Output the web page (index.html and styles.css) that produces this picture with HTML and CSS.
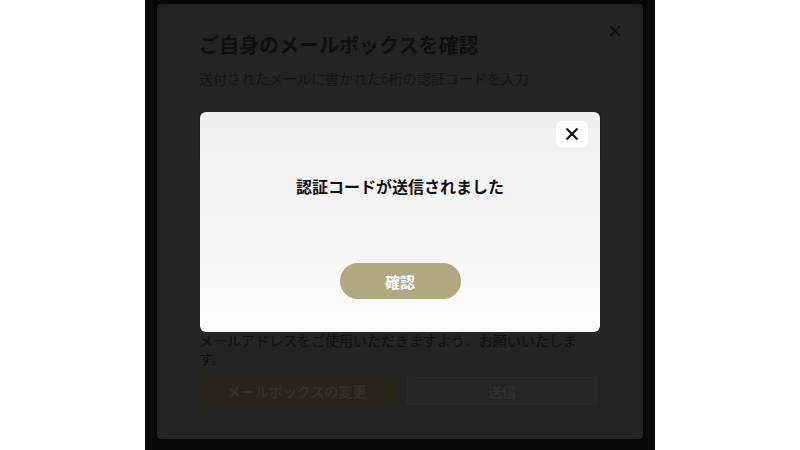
FILE: index.html
```html
<!DOCTYPE html>
<html lang="ja">
<head>
<meta charset="utf-8">
<link rel="stylesheet" href="styles.css">
</head>
<body>
<div class="frame">
  <div class="modal">
    <button class="modal-close" aria-label="閉じる">
      <svg width="12" height="12" viewBox="0 0 12 12"><path d="M1 1L11 11M11 1L1 11" stroke="currentColor" stroke-width="2" fill="none"/></svg>
    </button>
    <h1 class="modal-title">ご自身のメールボックスを確認</h1>
    <p class="modal-sub">送付されたメールに書かれた6桁の認証コードを入力</p>
    <div class="modal-hidden">
      <div class="code-input"></div>
    </div>
    <p class="modal-text">メールアドレスをご使用いただきますよう、お願いいたします。</p>
    <div class="modal-actions">
      <button class="btn btn-dark">メールボックスの変更</button>
      <button class="btn btn-ghost">送信</button>
    </div>
  </div>

  <div class="dialog">
    <button class="dialog-close" aria-label="閉じる">
      <svg width="14" height="14" viewBox="0 0 14 14"><path d="M1.5 1.5L12.5 12.5M12.5 1.5L1.5 12.5" stroke="#111" stroke-width="2.2" fill="none"/></svg>
    </button>
    <p class="dialog-title">認証コードが送信されました</p>
    <button class="dialog-btn">確認</button>
  </div>
</div>
</body>
</html>
```

FILE: styles.css
```css
* { box-sizing: border-box; }
html, body { margin: 0; padding: 0; }
body {
  background: #ffffff;
  width: 800px;
  height: 450px;
  overflow: hidden;
  font-family: "Noto Sans CJK JP", "Noto Sans", sans-serif;
}
.frame {
  position: relative;
  width: 510px;
  height: 450px;
  margin: 0 auto;
  background: #080808;
  padding: 4px 12px 0;
}
.modal {
  position: relative;
  background: #242424;
  border-radius: 4px;
  height: 435px;
  padding: 27px 42px 0;
}
.modal-close {
  position: absolute;
  top: 21px;
  right: 22px;
  width: 12px;
  height: 12px;
  padding: 0;
  border: 0;
  background: none;
  color: #111;
  display: flex;
}
.modal-title {
  margin: 0;
  font-size: 20px;
  line-height: 28px;
  font-weight: 700;
  color: #0f0f0f;
}
.modal-sub {
  margin: 9px 0 0;
  font-size: 14px;
  line-height: 20px;
  color: #161616;
}
.modal-hidden {
  height: 243px;
  padding-top: 24px;
}
.code-input {
  height: 48px;
  background: #242424;
  border: 1px solid #1e1e1e;
  border-radius: 4px;
}
.modal-text {
  margin: 0;
  font-size: 14px;
  line-height: 18px;
  color: #111;
}
.modal-actions {
  display: flex;
  gap: 12px;
  margin-top: 10px;
}
.btn {
  height: 28px;
  border-radius: 2px;
  font-family: inherit;
  font-size: 14px;
  font-weight: 700;
  padding: 0;
}
.btn-dark {
  width: 197px;
  background: #27241b;
  border: 0;
  color: #343022;
  margin-left: -1px;
}
.btn-ghost {
  width: 190px;
  background: #262626;
  border: 1px solid #2a2a2a;
  color: #303030;
}
.dialog {
  position: absolute;
  left: 55px;
  top: 112px;
  width: 400px;
  height: 220px;
  border-radius: 6px;
  background: linear-gradient(#efefef, #fbfbfb);
  display: flex;
  flex-direction: column;
  align-items: center;
  padding-top: 62px;
}
.dialog-close {
  position: absolute;
  top: 9px;
  right: 12px;
  width: 32px;
  height: 26px;
  border: 0;
  border-radius: 6px;
  background: #ffffff;
  display: flex;
  align-items: center;
  justify-content: center;
  padding: 0;
}
.dialog-title {
  margin: 0;
  font-size: 16px;
  line-height: 24px;
  font-weight: 700;
  color: #111;
}
.dialog-btn {
  margin-top: 65px;
  width: 121px;
  height: 36px;
  border: 0;
  border-radius: 18px;
  background: #b0a880;
  color: #ffffff;
  font-family: inherit;
  font-size: 15px;
  font-weight: 700;
}
```
